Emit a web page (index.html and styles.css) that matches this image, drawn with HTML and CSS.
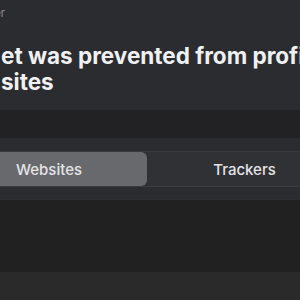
FILE: index.html
```html
<!DOCTYPE html>
<html>
<head>
<meta charset="utf-8">
<link rel="stylesheet" href="styles.css">
</head>
<body>
<div class="page">
  <header class="head">
    <div class="label"><span>Tracker</span></div>
    <h1 class="title"><span class="line">et was prevented from profiling you</span><span class="line">sites</span></h1>
  </header>
  <div class="band"></div>
  <div class="gap"></div>
  <div class="seg">
    <div class="seg-item active">Websites</div>
    <div class="seg-item">Trackers</div>
  </div>
  <div class="under"></div>
  <div class="list"></div>
  <div class="foot"></div>
</div>
</body>
</html>
```

FILE: styles.css
```css
html, body {
  margin: 0;
  padding: 0;
  width: 300px;
  height: 300px;
  overflow: hidden;
  background: #2b2c30;
}
.page {
  width: 300px;
  height: 300px;
  overflow: hidden;
  font-family: Inter, "Liberation Sans", sans-serif;
  display: flex;
  flex-direction: column;
}
.head {
  padding-top: 7px;
  height: 110px;
  box-sizing: border-box;
  flex: none;
}
.label {
  display: flex;
  justify-content: flex-end;
  width: 5px;
  overflow: hidden;
  font-size: 11px;
  line-height: 13px;
  color: #8d8d92;
  white-space: nowrap;
}
.label span { flex: none; }
.title {
  margin: 23px 0 0 1px;
  font-size: 22.5px;
  line-height: 26px;
  font-weight: 700;
  color: #f0f0f2;
  white-space: nowrap;
}
.line { display: block; }
.band {
  height: 28px;
  background: #222224;
  flex: none;
}
.gap {
  height: 13px;
  flex: none;
}
.seg {
  flex: none;
  display: grid;
  grid-template-columns: 196px 195px;
  margin-left: -49px;
  width: 391px;
  height: 34px;
  border-top: 1px solid #393a3e;
  border-bottom: 1px solid #3a3b3f;
  background: #303135;
}
.seg-item {
  display: flex;
  align-items: center;
  justify-content: center;
  font-size: 15px;
  font-weight: 500;
  color: #e4e4e6;
  border-radius: 6px;
}
.seg-item.active {
  background: #68696d;
}
.under {
  flex: none;
  height: 12px;
  border-bottom: 1px solid #303030;
  background: #2b2c30;
}
.list {
  flex: none;
  height: 72px;
  background: #212121;
}
.foot {
  flex: 1;
  background: #2a2a2a;
}
```
